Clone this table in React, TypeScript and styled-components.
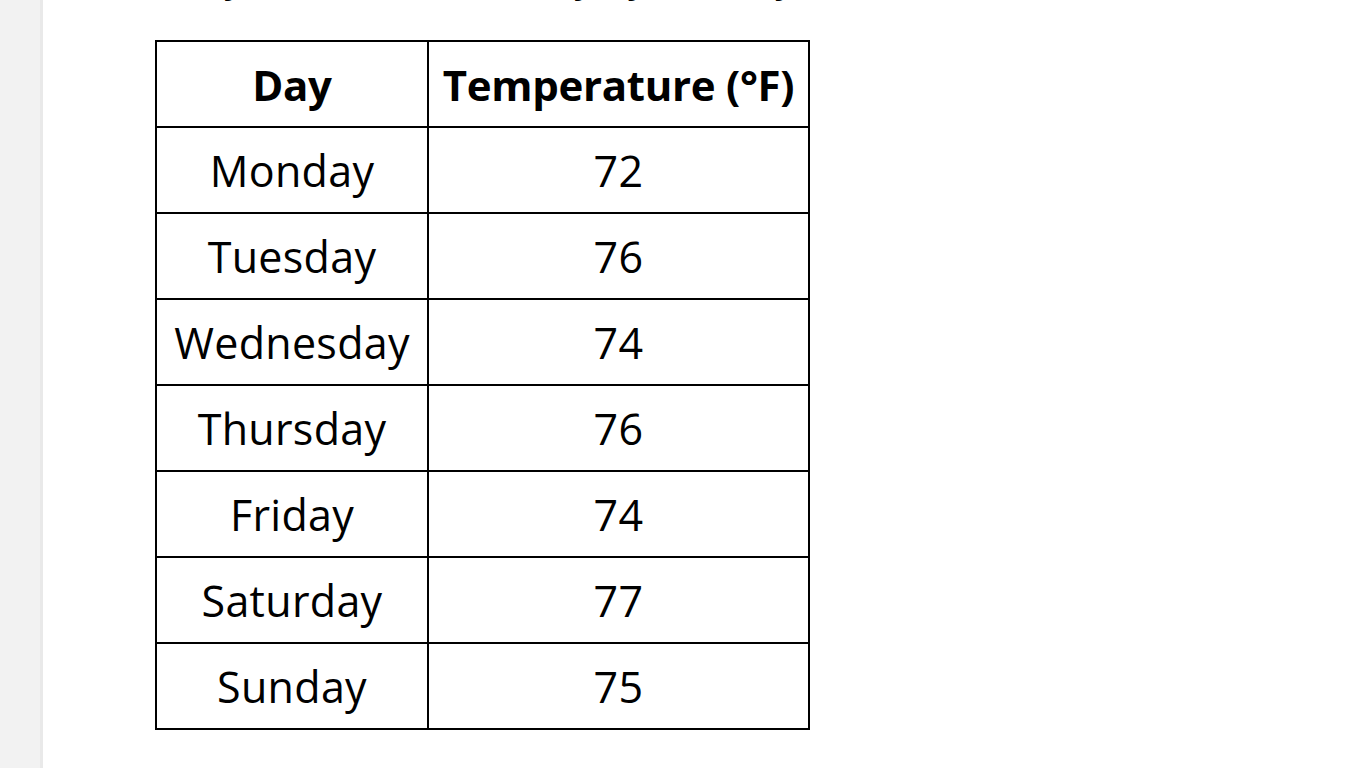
import styled, { createGlobalStyle } from "styled-components";

const rows = [
  { day: "Monday", temp: 72 },
  { day: "Tuesday", temp: 76 },
  { day: "Wednesday", temp: 74 },
  { day: "Thursday", temp: 76 },
  { day: "Friday", temp: 74 },
  { day: "Saturday", temp: 77 },
  { day: "Sunday", temp: 75 },
];

function App() {
  return (
    <Page>
      <GlobalStyle />
      <Sidebar />
      <Content>
        <Caption>Daily Weather Summary by Holiday</Caption>
        <Table>
          <colgroup>
            <col style={{ width: 272 }} />
            <col style={{ width: 381 }} />
          </colgroup>
          <thead>
            <tr>
              <HeadCell>Day</HeadCell>
              <HeadCell>Temperature (°F)</HeadCell>
            </tr>
          </thead>
          <tbody>
            {rows.map((r) => (
              <tr key={r.day}>
                <Cell>{r.day}</Cell>
                <Cell>{r.temp}</Cell>
              </tr>
            ))}
          </tbody>
        </Table>
      </Content>
    </Page>
  );
}

export default App;

const GlobalStyle = createGlobalStyle`
  html, body {
    margin: 0;
    padding: 0;
    background: #ffffff;
  }
  body {
    font-family: "Open Sans", "Noto Sans", sans-serif;
    color: #000;
  }
`;

const Page = styled.div`
  display: flex;
  width: 1366px;
  height: 768px;
  overflow: hidden;
  background: #fff;
`;

const Sidebar = styled.div`
  width: 40px;
  flex-shrink: 0;
  background: #f2f2f2;
  border-right: 3px solid #e9e9e9;
`;

const Content = styled.div`
  flex: 1;
  padding-left: 112px;
  overflow: hidden;
`;

const Caption = styled.div`
  font-size: 39px;
  line-height: 58px;
  height: 58px;
  margin-top: -52px;
  margin-bottom: 34px;
  font-weight: 500;
  white-space: nowrap;
`;

const Table = styled.table`
  border-collapse: collapse;
  table-layout: fixed;
  width: 653px;
`;

const HeadCell = styled.th`
  height: 84px;
  padding: 0;
  border: 2px solid #000;
  font-size: 42px;
  font-weight: 700;
  text-align: center;
  vertical-align: middle;
  letter-spacing: -0.3px;
`;

const Cell = styled.td`
  height: 84px;
  padding: 0;
  border: 2px solid #000;
  font-size: 43px;
  font-weight: 400;
  text-align: center;
  vertical-align: middle;
  letter-spacing: 0.3px;
`;
